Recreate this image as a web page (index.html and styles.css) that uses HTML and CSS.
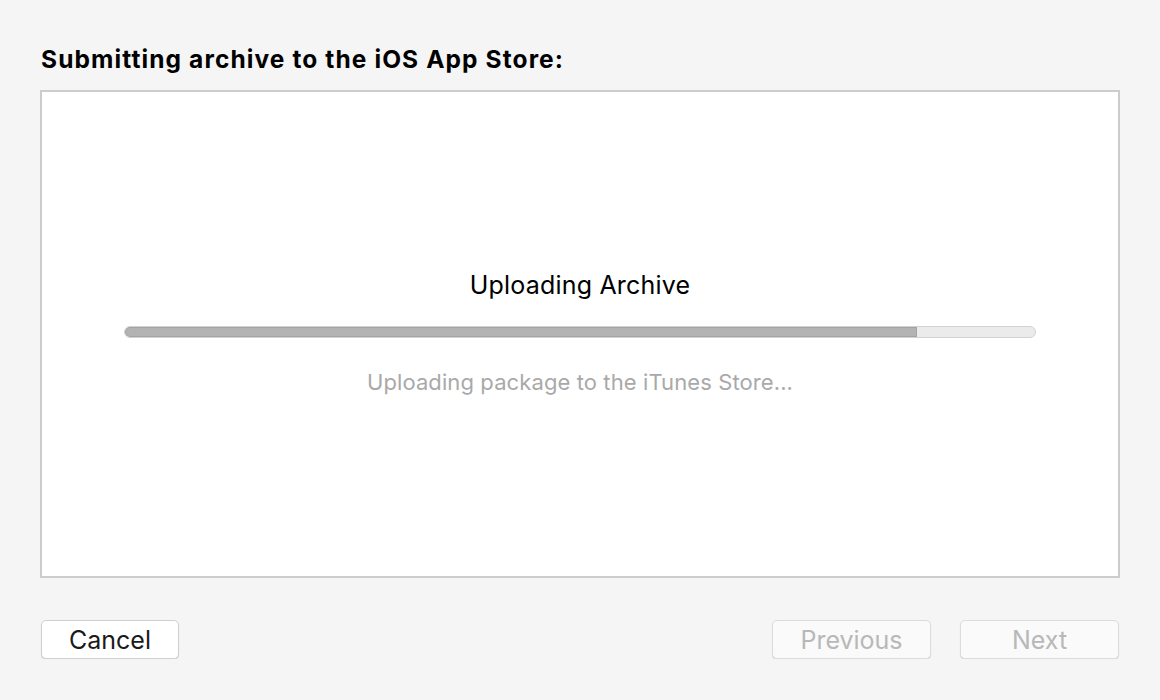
FILE: index.html
```html
<!DOCTYPE html>
<html lang="en">
<head>
  <meta charset="UTF-8">
  <title>Submitting archive</title>
  <link rel="stylesheet" href="styles.css">
</head>
<body>

<div class="sheet">
  <h1 class="sheet-title">Submitting archive to the iOS App Store:</h1>

  <div class="panel">
    <div class="status">Uploading Archive</div>
    <div class="progress">
      <div class="progress-fill" style="width: 87%"></div>
    </div>
    <div class="detail">Uploading package to the iTunes Store...</div>
  </div>

  <div class="footer">
    <button class="btn">Cancel</button>
    <div class="nav">
      <button class="btn btn-off" disabled>Previous</button>
      <button class="btn btn-off" disabled>Next</button>
    </div>
  </div>
</div>

</body>
</html>
```

FILE: styles.css
```css
body {
  margin: 0;
  background: #f5f5f5;
  font-family: Inter, "Liberation Sans", Arial, sans-serif;
  color: #000;
}
.sheet {
  width: 1080px;
  padding: 40px 40px 0 40px;
}
.sheet-title {
  margin: 0 0 0 1px;
  font-size: 24.5px;
  font-weight: bold;
  letter-spacing: 1.1px;
  line-height: 38px;
  height: 50px;
}
.panel {
  box-sizing: border-box;
  height: 488px;
  background: #fff;
  border: 2px solid #cccccc;
  display: flex;
  flex-direction: column;
  align-items: center;
  padding-top: 178px;
}
.status {
  font-size: 25px;
  letter-spacing: 0.2px;
  line-height: 30px;
}
.progress {
  box-sizing: border-box;
  width: 912px;
  height: 12px;
  margin-top: 26px;
  border: 1px solid #d2d2d2;
  border-radius: 6px;
  background: #ebebeb;
  overflow: hidden;
}
.progress-fill {
  height: 100%;
  background: #b3b3b3;
  box-shadow: inset 0 0 0 1px #a3a3a3;
  border-radius: 6px 0 0 6px;
}
.detail {
  margin-top: 31px;
  font-size: 22px;
  letter-spacing: 0.1px;
  line-height: 26px;
  color: #a9a9a9;
}
.footer {
  display: flex;
  justify-content: space-between;
  margin-top: 42px;
}
.nav {
  display: flex;
  gap: 27px;
}
.btn {
  box-sizing: border-box;
  height: 39px;
  width: 138px;
  margin: 0 1px;
  padding: 0;
  font-family: Inter, "Liberation Sans", Arial, sans-serif;
  font-size: 25px;
  color: #1a1a1a;
  background: #fff;
  border: 1px solid #cfcfcf;
  border-radius: 5px;
  box-shadow: 0 1px 1px rgba(0,0,0,0.12);
}
.btn-off {
  width: 159px;
  color: #b8b8b8;
  background: #fafafa;
  border-color: #dcdcdc;
}
```
